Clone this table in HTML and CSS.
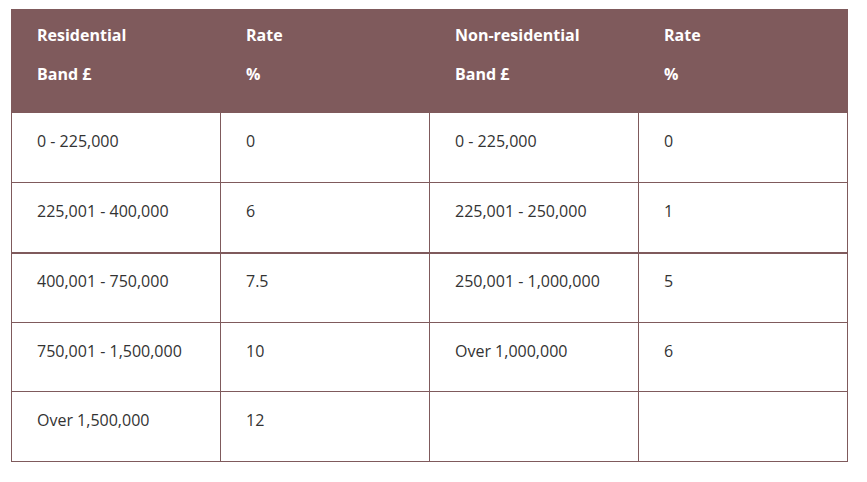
FILE: index.html
```html
<!DOCTYPE html>
<html lang="en">
<head>
<meta charset="utf-8">
<title>Rates</title>
<link rel="stylesheet" href="styles.css">
</head>
<body>
<div class="wrap">
<table class="rates">
  <colgroup>
    <col class="c1"><col class="c2"><col class="c3"><col class="c4">
  </colgroup>
  <thead>
    <tr>
      <th>Residential<br>Band £</th>
      <th>Rate<br>%</th>
      <th>Non-residential<br>Band £</th>
      <th>Rate<br>%</th>
    </tr>
  </thead>
  <tbody>
    <tr><td>0 - 225,000</td><td>0</td><td>0 - 225,000</td><td>0</td></tr>
    <tr><td>225,001 - 400,000</td><td>6</td><td>225,001 - 250,000</td><td>1</td></tr>
    <tr class="thick"><td>400,001 - 750,000</td><td>7.5</td><td>250,001 - 1,000,000</td><td>5</td></tr>
    <tr class="short"><td>750,001 - 1,500,000</td><td>10</td><td>Over 1,000,000</td><td>6</td></tr>
    <tr><td>Over 1,500,000</td><td>12</td><td></td><td></td></tr>
  </tbody>
</table>
</div>
</body>
</html>
```
FILE: styles.css
```css
html, body {
  margin: 0;
  padding: 0;
  background: #ffffff;
}
.wrap {
  padding: 9px 19px 0 11px;
}
.rates {
  width: 836px;
  table-layout: fixed;
  border-collapse: collapse;
  font-family: "Open Sans", "Liberation Sans", sans-serif;
  font-size: 16px;
  color: #333333;
}
.c1, .c2, .c3 { width: 209px; }
.c4 { width: 209px; }
.rates th {
  background: #7f5a5c;
  color: #ffffff;
  font-weight: 700;
  text-align: left;
  line-height: 39px;
  padding: 6px 25px 18px;
  border: 1px solid #7f5a5c;
  vertical-align: top;
}
.rates td {
  border: 1px solid #7f5a5c;
  line-height: 24px;
  height: 24px;
  padding: 16px 25px 29px;
  vertical-align: top;
}
.rates tr.thick td {
  border-top: 2px solid #7f5a5c;
  padding-top: 15px;
  padding-bottom: 29px;
}
.rates tr.short td {
  padding-bottom: 28px;
}
```
